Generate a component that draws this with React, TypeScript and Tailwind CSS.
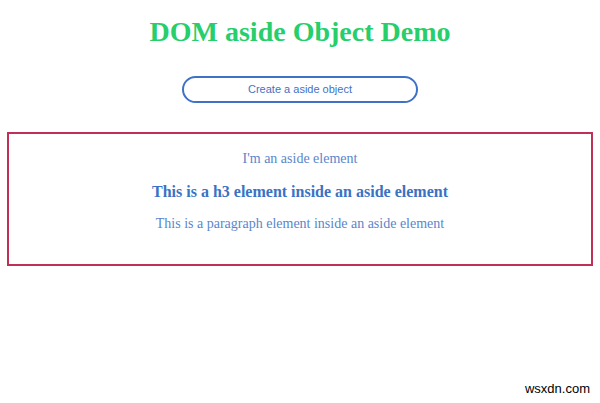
export default function App() {
  return (
    <div className="relative h-[403px] w-[600px] overflow-hidden bg-white font-['Liberation_Serif',serif]">
      <h1 className="pt-[14px] text-center text-[28px] leading-[36px] font-bold text-[#27ce6c]">
        DOM aside Object Demo
      </h1>
      <div className="mt-[26px] flex justify-center">
        <button className="h-[27px] w-[236px] rounded-full border-2 border-[#3f72c6] bg-white font-['Liberation_Sans',sans-serif] text-[11px] text-[#3f72c6]">
          Create a aside object
        </button>
      </div>
      <aside className="mx-[7px] mt-[29px] h-[134px] border-2 border-[#c03056] pt-[16px] text-center">
        <p className="text-[14px] leading-[18px] text-[#5a86cb]">I'm an aside element</p>
        <h3 className="mt-[14px] text-[16px] leading-[20px] font-bold text-[#3a72c4]">
          This is a h3 element inside an aside element
        </h3>
        <p className="mt-[13px] text-[14px] leading-[18px] text-[#5a86cb]">
          This is a paragraph element inside an aside element
        </p>
      </aside>
      <span className="absolute right-[10px] bottom-[5px] font-['Liberation_Sans',sans-serif] text-[13px] text-black">
        wsxdn.com
      </span>
    </div>
  );
}
